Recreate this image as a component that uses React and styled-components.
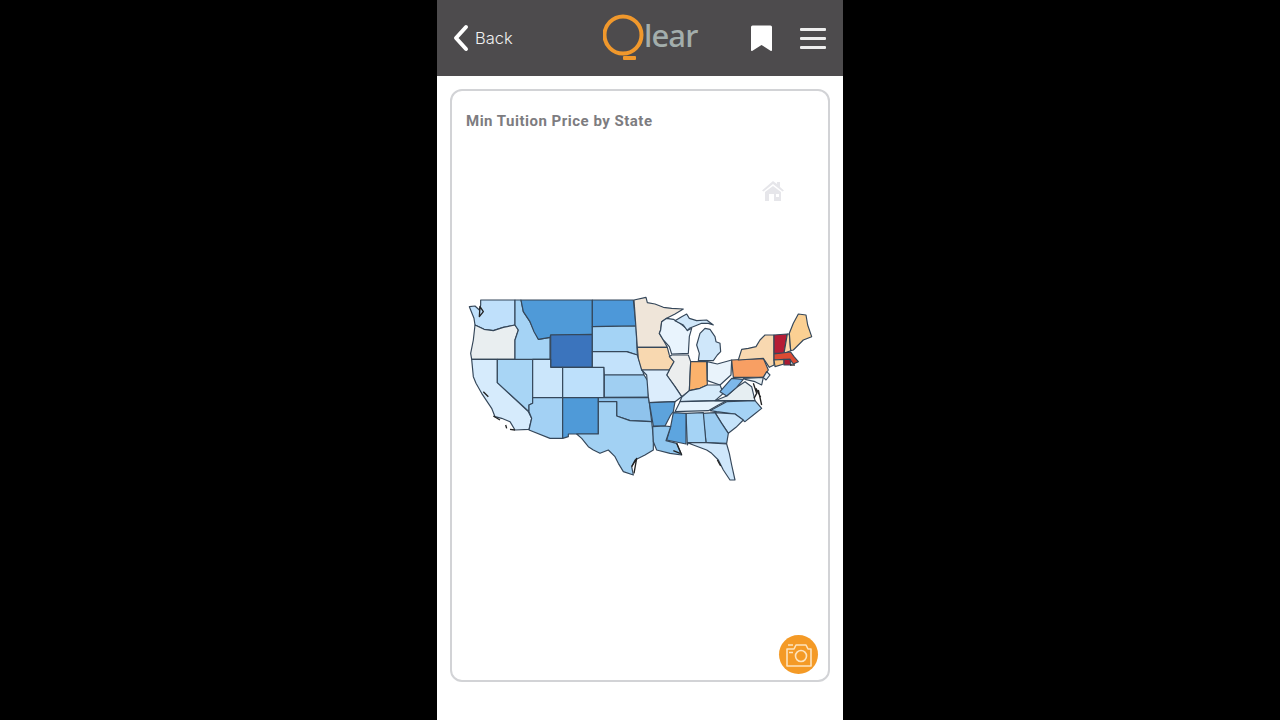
import React from "react"
import styled, { createGlobalStyle } from "styled-components"

const GlobalStyle = createGlobalStyle`
  html, body {
    margin: 0;
    height: 100%;
    background: #000;
    overflow: hidden;
  }
`

const Phone = styled.div`
  width: 406px;
  height: 720px;
  margin: 0 auto;
  background: #fff;
  display: flex;
  flex-direction: column;
  font-family: "Lato", "Liberation Sans", sans-serif;
`

const Header = styled.header`
  height: 76px;
  flex: none;
  background: #4d4b4d;
  display: flex;
  align-items: center;
  padding: 0 17px 0 15px;
  box-sizing: border-box;
`

const BackLink = styled.div`
  display: flex;
  align-items: center;
  gap: 6px;
  color: #f1f1f1;
  font-family: "Inter", sans-serif;
  font-size: 16.5px;
  font-weight: 300;
  width: 61px;
  white-space: nowrap;
`

const Logo = styled.div`
  display: flex;
  align-items: center;
  margin-left: 90px;
  height: 76px;
`

const LogoWord = styled.span`
  margin-left: -3px;
  margin-top: -6px;
  color: #a3aeac;
  font-family: "Noto Sans", sans-serif;
  font-size: 31px;
  font-weight: 500;
  line-height: 1;
  letter-spacing: -0.9px;
`

const Actions = styled.div`
  margin-left: auto;
  display: flex;
  align-items: center;
  gap: 27px;
`

const Burger = styled.div`
  width: 26px;
  display: flex;
  flex-direction: column;
  gap: 6px;
  span {
    height: 3px;
    background: #eeeeee;
    border-radius: 1px;
  }
`

const Card = styled.section`
  position: relative;
  margin: 13px 13px 0;
  height: 593px;
  box-sizing: border-box;
  border: 2px solid #d2d3d6;
  border-radius: 12px;
  padding: 20px 14px 0;
`

const Title = styled.h2`
  margin: 0;
  color: #7d7c80;
  font-family: "Roboto", sans-serif;
  font-size: 15px;
  line-height: 20px;
  font-weight: 700;
  letter-spacing: 0.5px;
`

const MapFrame = styled.svg`
  display: block;
  margin: 163px 0 0 -2px;
  width: 350px;
  height: 200px;
  filter: blur(0.3px);
`

const HomeButton = styled.svg`
  position: absolute;
  left: 309px;
  top: 88px;
  width: 24px;
  height: 24px;
`

const CameraButton = styled.div`
  position: absolute;
  right: 10px;
  bottom: 6px;
  width: 39px;
  height: 39px;
  border-radius: 50%;
  background: #f49a26;
  display: flex;
  align-items: center;
  justify-content: center;
`

// coordinates are the 3x zoom of the map, west half from x=460, east half from x=630
const westStates = [
  ["#bfe0fb", "62,30 165,30 165,105 130,112 100,122 72,118 45,105 42,85 28,50 45,48 58,60 62,45"],
  ["#e9eef0", "45,105 72,118 100,122 130,112 165,105 175,120 165,150 165,208 35,208 32,190 40,150"],
  ["#d6ebfc", "35,208 112,208 112,278 205,365 215,385 207,418 165,420 150,395 125,385 105,380 95,355 85,340 65,310 48,280 40,260"],
  ["#a8d5f5", "112,208 218,208 218,340 207,345 207,365 112,278"],
  ["#a5d3f5", "165,30 183,30 190,65 210,95 235,148 270,142 270,208 165,208 165,150 175,120 165,105"],
  ["#4f9ad8", "183,30 397,30 397,133 272,135 270,142 235,148 222,125 210,95 190,65"],
  ["#3b74bd", "272,135 397,133 397,232 272,232"],
  ["#cbe6fb", "218,208 272,208 272,232 308,232 308,323 218,323"],
  ["#bde0fb", "308,232 432,232 432,323 308,323"],
  ["#a3d1f4", "218,323 308,323 308,445 270,445 207,420 215,385 207,365 207,345 218,340"],
  ["#4f9ad8", "308,323 415,323 415,432 325,432 325,440 308,445"],
  ["#4d98d9", "397,30 520,30 528,108 397,110"],
  ["#a4d3f5", "397,110 528,108 532,195 500,185 397,185"],
  ["#c3e2fb", "397,185 500,185 532,195 552,255 433,255 432,232 397,232"],
  ["#a0cff2", "433,255 552,255 565,275 565,322 433,322"],
  ["#8fc3ec", "415,323 565,322 568,338 575,395 510,392 470,378 470,335 415,335"],
  ["#a2d1f3", "415,335 470,335 470,378 510,392 575,395 580,440 580,480 555,495 525,510 515,530 520,555 490,545 475,520 465,500 445,480 420,490 400,480 385,470 365,445 350,432 415,432"],
]

const eastStates = [
  ["#efe5d9", "12,30 48,22 52,38 75,42 100,52 125,55 160,57 135,72 110,85 95,95 92,120 88,130 100,150 112,172 22,172"],
  ["#f8d8b0", "22,172 112,172 118,195 132,215 118,240 35,240 25,205"],
  ["#e9f4fd", "95,95 110,85 130,88 150,100 175,120 185,115 178,140 175,190 125,192 118,170 100,150 88,130 92,120"],
  ["#cfe7fa", "135,92 155,80 170,72 178,85 200,92 230,90 250,105 235,100 215,100 195,108 178,115 172,122 160,105"],
  ["#cfe7fa", "205,212 208,190 200,165 210,130 225,115 240,118 255,140 258,155 270,160 272,185 262,195 250,212"],
  ["#eceeee", "125,195 175,195 182,215 178,302 155,320 135,290 110,255 118,240 132,215 118,200"],
  ["#dcedfc", "35,240 118,240 110,255 135,290 155,320 135,335 58,338 55,320 50,255"],
  ["#fbb26c", "182,215 230,215 232,285 210,295 178,302"],
  ["#e9f3fb", "232,215 262,222 305,210 303,255 270,285 232,272"],
  ["#d6ebfb", "150,335 155,322 178,302 210,295 232,285 270,285 280,310 255,332"],
  ["#e6f3fd", "150,335 290,332 265,345 235,362 135,365"],
  ["#e6eef2", "255,332 290,318 320,292 345,275 365,290 375,332"],
  ["#7db8ea", "270,305 305,265 340,268 320,292 290,318"],
  ["#a5d3f5", "240,362 290,335 375,332 395,355 370,375 345,395 315,372 260,365"],
  ["#c5e3fa", "255,368 315,372 340,390 318,412 295,430 275,400"],
  ["#9ccdf2", "218,370 255,368 275,400 295,430 290,460 228,458"],
  ["#a5d3f5", "168,370 220,368 228,458 175,458 172,465"],
  ["#5da5df", "130,368 168,370 168,462 110,450 122,410"],
  ["#5da3dc", "58,338 135,335 130,365 122,375 105,408 70,408"],
  ["#90c6ee", "68,410 105,408 122,410 108,452 140,460 155,495 120,490 80,480 70,455"],
  ["#cfe7fb", "172,458 228,458 290,462 298,490 305,525 315,570 300,570 280,540 265,510 245,490 230,480 190,465"],
  ["#f89f63", "305,210 400,205 415,240 400,262 310,262"],
  ["#f8d8b0", "325,210 335,178 355,175 378,170 390,150 405,135 432,135 432,225 418,232 400,205"],
  ["#e9f1f8", "400,262 410,245 420,255 408,270"],
  ["#e6eef2", "340,265 400,262 395,285 375,275 345,268"],
  ["#b51c36", "432,135 472,132 462,190 432,190"],
  ["#fbd9ae", "472,132 478,132 482,182 462,190"],
  ["#fbd093", "478,130 490,100 505,72 528,75 533,105 545,140 520,150 505,165 490,180 482,182"],
  ["#dc4b33", "432,192 482,186 492,200 505,215 490,222 480,208 432,210"],
  ["#fbc480", "432,210 462,208 462,222 435,230"],
  ["#a81a33", "462,208 480,208 483,225 462,225"],
]

const coastDetails = [
  "M60 50 L58 80 L70 65 Z",
  "M70 305 L85 320 M100 378 L120 390",
  "M137 405 L140 415 M165 420 L150 418",
  "M515 530 L530 505 L522 550",
]

const eastDetails = [
  "M140 460 L155 495 M130 482 L150 490",
  "M370 280 L380 310 L372 325 M385 300 L395 345 M378 295 L392 322",
  "M262 510 L272 528",
  "M480 225 L495 225",
]

const USMap = () => (
  <MapFrame viewBox="12 12 1050 600">
    <g stroke="#35475a" strokeWidth="3.5" strokeLinejoin="round" fill="none">
      {westStates.map(([fill, points]) => (
        <polygon key={points} points={points} fill={fill} />
      ))}
      {coastDetails.map(d => (
        <path key={d} d={d} stroke="#222" strokeWidth="4" />
      ))}
      <g transform="translate(510 0)">
        {eastStates.map(([fill, points]) => (
          <polygon key={points} points={points} fill={fill} />
        ))}
        {eastDetails.map(d => (
          <path key={d} d={d} stroke="#222" strokeWidth="4" />
        ))}
      </g>
    </g>
  </MapFrame>
)

const App = () => (
  <Phone>
    <GlobalStyle />
    <Header>
      <BackLink>
        <svg width="17" height="28" viewBox="0 0 17 28" fill="none">
          <path d="M14 3 L4 14 L14 25" stroke="#fff" strokeWidth="4" strokeLinecap="round" strokeLinejoin="round" />
        </svg>
        Back
      </BackLink>
      <Logo>
        <svg width="44" height="50" viewBox="0 0 44 50" fill="none">
          <circle cx="20" cy="22" r="18.5" stroke="#f0982c" strokeWidth="4" />
          <rect x="20" y="43" width="13" height="4" rx="1" fill="#f0982c" />
        </svg>
        <LogoWord>lear</LogoWord>
      </Logo>
      <Actions>
        <svg width="23" height="27" viewBox="0 0 23 27">
          <path d="M1 2 Q1 0.5 2.5 0.5 H20.5 Q22 0.5 22 2 V25 Q22 26.5 20.5 25.8 L11.5 20 L2.5 25.8 Q1 26.5 1 25 Z" fill="#fff" />
        </svg>
        <Burger>
          <span />
          <span />
          <span />
        </Burger>
      </Actions>
    </Header>
    <Card>
      <Title>Min Tuition Price by State</Title>
      <USMap />
      <HomeButton viewBox="0 0 24 24" fill="#e6e6ea">
        <path d="M12 2 L16 5 V3 H19 V8 L23 11.5 L21.5 12.5 L12 5 L2.5 12.5 L1 11.5 Z" />
        <path d="M4 13 L12 7 L20 13 V22 H4 Z M8 15 V22 H13 V15 Z M15 15 V18 H18 V15 Z" fillRule="evenodd" />
      </HomeButton>
      <CameraButton>
        <svg width="28" height="26" viewBox="0 0 28 26" fill="none" stroke="#fde3bd" strokeWidth="1.6" strokeLinejoin="round">
          <path d="M2 7 H9 L11 3 H21 L23 7 H26 V24 H2 Z" />
          <path d="M3 3 H8 M4 10.5 H8" />
          <circle cx="16" cy="14" r="5.5" />
        </svg>
      </CameraButton>
    </Card>
  </Phone>
)

export default App
